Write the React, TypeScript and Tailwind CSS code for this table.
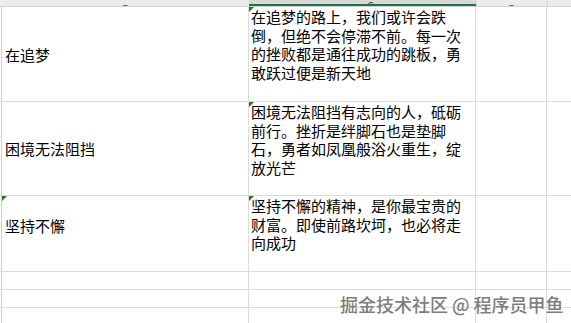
const cjk = { fontFamily: '"Noto Sans CJK SC", "Noto Sans", sans-serif' };

const rows = [
  {
    h: "h-[95px]",
    title: "在追梦",
    titleClass: "items-center",
    lines: ["在追梦的路上，我们或许会跌", "倒，但绝不会停滞不前。每一次", "的挫败都是通往成功的跳板，勇", "敢跃过便是新天地"],
    markB: false,
  },
  {
    h: "h-[94px]",
    title: "困境无法阻挡",
    titleClass: "items-center",
    lines: ["困境无法阻挡有志向的人，砥砺", "前行。挫折是绊脚石也是垫脚", "石，勇者如凤凰般浴火重生，绽", "放光芒"],
    markB: false,
  },
  {
    h: "h-[76px]",
    title: "坚持不懈",
    titleClass: "items-start pt-[20px]",
    lines: ["坚持不懈的精神，是你最宝贵的", "财富。即使前路坎坷，也必将走", "向成功"],
    markB: true,
  },
];

function Mark() {
  return <span className="absolute left-0 top-0 h-0 w-0 border-t-[5px] border-r-[5px] border-t-[#1e7b1e] border-r-transparent" />;
}

function EmptyRow() {
  return (
    <div className="flex h-[18px] border-b border-[#dcdcdc]">
      <div className="w-[2px] border-r border-[#d0d0d0]" />
      <div className="w-[247px] border-r border-[#dcdcdc]" />
      <div className="w-[227px] border-r border-[#dcdcdc]" />
      <div className="w-[71px] border-r border-[#dcdcdc]" />
      <div className="flex-1" />
    </div>
  );
}

export default function App() {
  return (
    <div className="relative h-[323px] w-[571px] overflow-hidden bg-white text-black" style={cjk}>
      <div className="flex h-[7px] border-b border-[#d4d4d4] bg-[#ececec] text-[11px] leading-[12px] text-[#555]">
        <div className="w-[2px]" />
        <div className="flex w-[247px] items-end justify-center overflow-hidden">
          <span className="mb-[-8px]">B</span>
        </div>
        <div className="flex w-[227px] items-end justify-center overflow-hidden border-b-2 border-[#217346] bg-[#d9d9d9]">
          <span className="mb-[-7px] ml-[16px]">C</span>
        </div>
        <div className="flex w-[71px] items-end justify-center overflow-hidden border-l border-[#d4d4d4]">
          <span className="mb-[-8px]">D</span>
        </div>
        <div className="flex-1 border-l border-[#d4d4d4]" />
      </div>

      {rows.map((r) => (
        <div key={r.title} className={`flex ${r.h} border-b border-[#dcdcdc]`}>
          <div className="w-[2px] border-r border-[#d0d0d0]" />
          <div className={`relative flex w-[247px] border-r border-[#dcdcdc] pl-[3px] text-[15px] ${r.titleClass}`}>
            {r.markB && <Mark />}
            <span className="leading-[19px]">{r.title}</span>
          </div>
          <div className="relative w-[227px] border-r border-[#dcdcdc] pl-[2px] pt-[1px] text-[15px] leading-[18.5px]">
            <Mark />
            {r.lines.map((l) => (
              <div key={l} className="whitespace-nowrap">
                {l}
              </div>
            ))}
          </div>
          <div className="w-[71px] border-r border-[#dcdcdc]" />
          <div className="flex-1" />
        </div>
      ))}

      <EmptyRow />
      <EmptyRow />
      <EmptyRow />

      <div
        className="absolute left-[340px] top-[293px] whitespace-nowrap text-[18px] font-medium leading-[22px] text-[#7d7d7d]"
        style={{ textShadow: "0 0 2px #fff, 0 0 1px #fff" }}
      >
        掘金技术社区 @ 程序员甲鱼
      </div>
    </div>
  );
}
